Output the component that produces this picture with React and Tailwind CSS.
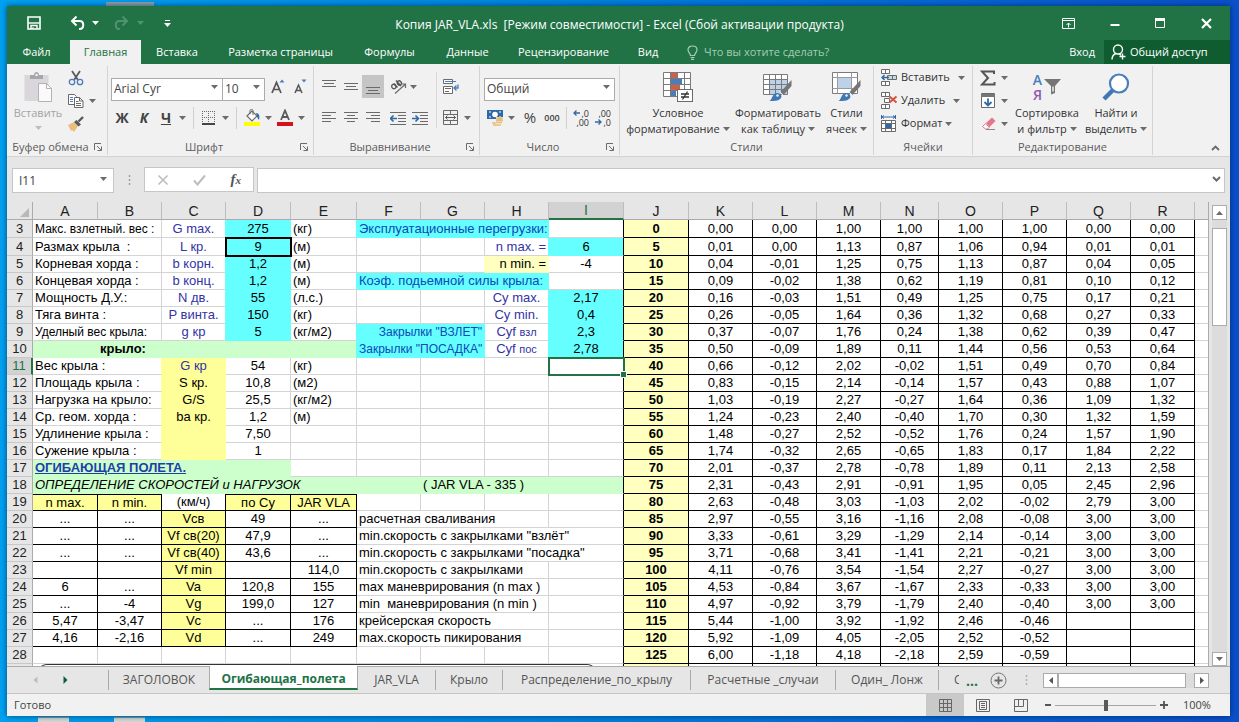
import { useState } from "react";
import clsx from "clsx";

/* ---------- sheet data ---------- */

const COLUMNS = [
  ["A", "w-[65px]"],
  ["B", "w-[64px]"],
  ["C", "w-[64px]"],
  ["D", "w-[65px]"],
  ["E", "w-[66px]"],
  ["F", "w-[64px]"],
  ["G", "w-[64px]"],
  ["H", "w-[64px]"],
  ["I", "w-[75px]"],
  ["J", "w-[65px]"],
  ["K", "w-[64px]"],
  ["L", "w-[64px]"],
  ["M", "w-[64px]"],
  ["N", "w-[58px]"],
  ["O", "w-[64px]"],
  ["P", "w-[64px]"],
  ["Q", "w-[64px]"],
  ["R", "w-[64px]"],
];

const FILLS = {
  cyan: { bg: "bg-[#66ffff]", r: "border-r-[#66ffff]", b: "border-b-[#66ffff]" },
  green: { bg: "bg-[#ccffcc]", r: "border-r-[#ccffcc]", b: "border-b-[#ccffcc]" },
  yellow: { bg: "bg-[#ffff99]", r: "border-r-[#ffff99]", b: "border-b-[#ffff99]" },
  pale: { bg: "bg-[#ffffc0]", r: "border-r-[#ffffc0]", b: "border-b-[#ffffc0]" },
};

const INDIGO = "text-[#3333a5]";
const BLUE = "text-[#0b49b8]";

const blank = {};
const label = (text, span = 2) => ({ text, span });
const mid = (text, extra) => ({ text, align: "center", ...extra });
const sym = (text) => mid(text, { color: INDIGO });
const cyan = (text, extra) => mid(text, { fill: "cyan", ...extra });
const box = (text, extra) => mid(text, { box: true, ...extra });
const speed = (a, b, c, d, e) => [box(a), box(b), box(c, { fill: "yellow" }), box(d), box(e)];

// cells of columns A..I, then J..R
const ROWS = [
  [3, [{ text: "Макс. взлетный. вес :", span: 2, small: true }, sym("G max."), cyan("275"), label("(кг)", 1), { text: "Эксплуатационные перегрузки:", span: 3, fill: "cyan", color: BLUE }, blank],
    "0 0,00 0,00 1,00 1,00 1,00 1,00 0,00 0,00"],
  [4, [label("Размах крыла  :"), sym("L кр."), cyan("9", { framed: true }), label("(м)", 1), blank, blank, { text: "n max. =", align: "right", color: INDIGO }, cyan("6")],
    "5 0,01 0,00 1,13 0,87 1,06 0,94 0,01 0,01"],
  [5, [label("Корневая хорда :"), sym("b корн."), cyan("1,2"), label("(м)", 1), blank, blank, { text: "n min. =", align: "right", fill: "pale" }, mid("-4")],
    "10 0,04 -0,01 1,25 0,75 1,13 0,87 0,04 0,05"],
  [6, [label("Концевая хорда :"), sym("b конц."), cyan("1,2"), label("(м)", 1), { text: "Коэф. подьемной силы крыла:", span: 3, fill: "cyan", color: BLUE }, blank],
    "15 0,09 -0,02 1,38 0,62 1,19 0,81 0,10 0,12"],
  [7, [label("Мощность Д.У.:"), sym("N дв."), cyan("55"), label("(л.с.)", 1), blank, blank, sym("Cy max."), cyan("2,17")],
    "20 0,16 -0,03 1,51 0,49 1,25 0,75 0,17 0,21"],
  [8, [label("Тяга винта :"), sym("P винта."), cyan("150"), label("(кг)", 1), blank, blank, sym("Cy min."), cyan("0,4")],
    "25 0,26 -0,05 1,64 0,36 1,32 0,68 0,27 0,33"],
  [9, [{ text: "Уделный вес крыла:", span: 2, small: true }, sym("g кр"), cyan("5"), label("(кг/м2)", 1), { text: 'Закрылки "ВЗЛЕТ"', span: 2, align: "right", fill: "cyan", color: BLUE, small: true }, { ...sym("Cyf "), sub: "взл" }, cyan("2,3")],
    "30 0,37 -0,07 1,76 0,24 1,38 0,62 0,39 0,47"],
  [10, [{ fill: "green" }, { text: "крыло:", span: 4, fill: "green", bold: true }, { text: 'Закрылки "ПОСАДКА"', span: 2, align: "right", fill: "cyan", color: BLUE, small: true }, { ...sym("Cyf "), sub: "пос" }, cyan("2,78")],
    "35 0,50 -0,09 1,89 0,11 1,44 0,56 0,53 0,64"],
  [11, [label("Вес крыла :"), mid("G кр", { fill: "yellow", color: INDIGO }), mid("54"), label("(кг)", 1), blank, blank, blank, { active: true }],
    "40 0,66 -0,12 2,02 -0,02 1,51 0,49 0,70 0,84"],
  [12, [label("Площадь крыла :"), mid("S кр.", { fill: "yellow" }), mid("10,8"), label("(м2)", 1), blank, blank, blank, blank],
    "45 0,83 -0,15 2,14 -0,14 1,57 0,43 0,88 1,07"],
  [13, [label("Нагрузка на крыло:"), mid("G/S", { fill: "yellow" }), mid("25,5"), label("(кг/м2)", 1), blank, blank, blank, blank],
    "50 1,03 -0,19 2,27 -0,27 1,64 0,36 1,09 1,32"],
  [14, [label("Ср. геом. хорда :"), mid("ba кр.", { fill: "yellow" }), mid("1,2"), label("(м)", 1), blank, blank, blank, blank],
    "55 1,24 -0,23 2,40 -0,40 1,70 0,30 1,32 1,59"],
  [15, [label("Удлинение крыла :"), { fill: "yellow" }, mid("7,50"), blank, blank, blank, blank, blank],
    "60 1,48 -0,27 2,52 -0,52 1,76 0,24 1,57 1,90"],
  [16, [label("Сужение крыла :"), { fill: "yellow" }, mid("1"), blank, blank, blank, blank, blank],
    "65 1,74 -0,32 2,65 -0,65 1,83 0,17 1,84 2,22"],
  [17, [{ text: "ОГИБАЮЩАЯ ПОЛЕТА.", span: 4, fill: "green", bold: true, underline: true, color: "text-[#1f3fa8]" }, blank, blank, blank, blank, blank],
    "70 2,01 -0,37 2,78 -0,78 1,89 0,11 2,13 2,58"],
  [18, [{ text: "ОПРЕДЕЛЕНИЕ СКОРОСТЕЙ и НАГРУЗОК", span: 5, fill: "green", italic: true }, { fill: "green" }, { text: "( JAR VLA - 335 )", span: 2, fill: "green" }, { fill: "green" }],
    "75 2,31 -0,43 2,91 -0,91 1,95 0,05 2,45 2,96"],
  [19, [box("n max.", { fill: "yellow", top: true }), box("n min.", { fill: "yellow", top: true }), box("(км/ч)"), box("по Су", { fill: "yellow", top: true }), box("JAR VLA", { fill: "yellow", top: true }), blank, blank, blank, blank],
    "80 2,63 -0,48 3,03 -1,03 2,02 -0,02 2,79 3,00"],
  [20, [...speed("...", "...", "Vсв", "49", "..."), label("расчетная сваливания", 3), blank],
    "85 2,97 -0,55 3,16 -1,16 2,08 -0,08 3,00 3,00"],
  [21, [...speed("...", "...", "Vf св(20)", "47,9", "..."), label('min.скорость с закрылками "взлёт"', 4)],
    "90 3,33 -0,61 3,29 -1,29 2,14 -0,14 3,00 3,00"],
  [22, [...speed("...", "...", "Vf св(40)", "43,6", "..."), label('min.скорость с закрылками "посадка"', 4)],
    "95 3,71 -0,68 3,41 -1,41 2,21 -0,21 3,00 3,00"],
  [23, [...speed("", "", "Vf min", "", "114,0"), label("min.скорость с закрылками", 3), blank],
    "100 4,11 -0,76 3,54 -1,54 2,27 -0,27 3,00 3,00"],
  [24, [...speed("6", "...", "Va", "120,8", "155"), label("max маневрирования (n max )", 3), blank],
    "105 4,53 -0,84 3,67 -1,67 2,33 -0,33 3,00 3,00"],
  [25, [...speed("...", "-4", "Vg", "199,0", "127"), label("min  маневрирования (n min )", 3), blank],
    "110 4,97 -0,92 3,79 -1,79 2,40 -0,40 3,00 3,00"],
  [26, [...speed("5,47", "-3,47", "Vc", "...", "176"), label("крейсерская скорость", 3), blank],
    "115 5,44 -1,00 3,92 -1,92 2,46 -0,46"],
  [27, [...speed("4,16", "-2,16", "Vd", "...", "249"), label("max.скорость пикирования", 3), blank],
    "120 5,92 -1,09 4,05 -2,05 2,52 -0,52"],
  [28, [blank, blank, blank, blank, blank, blank, blank, blank, blank],
    "125 6,00 -1,18 4,18 -2,18 2,59 -0,59"],
];

const RIGHT_COLS = [0, 1, 2, 3, 4, 5, 6, 7, 8];

const SHEETS = [
  ["ЗАГОЛОВОК", "w-[101px]"],
  ["Огибающая_полета", "w-[149px]"],
  ["JAR_VLA", "w-[77px]"],
  ["Крыло", "w-[67px]"],
  ["Распределение_по_крылу", "w-[188px]"],
  ["Расчетные _случаи", "w-[145px]"],
  ["Один_ Лонж", "w-[103px]"],
];

const TABS = [
  ["Главная", "w-[71px]"],
  ["Вставка", "w-[72px]"],
  ["Разметка страницы", "w-[135px]"],
  ["Формулы", "w-[83px]"],
  ["Данные", "w-[73px]"],
  ["Рецензирование", "w-[119px]"],
  ["Вид", "w-[50px]"],
];

/* ---------- small parts ---------- */

const Svg = ({ w = 16, h = 16, children, className }) => (
  <svg width={w} height={h} viewBox={`0 0 ${w} ${h}`} fill="none" className={clsx("shrink-0", className)} aria-hidden="true">
    {children}
  </svg>
);

const Caret = ({ color = "#6b6b6b", className }) => (
  <Svg w={7} h={4} className={className}>
    <path d="M0 0h7L3.5 4z" fill={color} />
  </Svg>
);

const IconBtn = ({ name, className, children }) => (
  <button type="button" aria-label={name} className={clsx("flex h-[23px] w-[22px] shrink-0 items-center justify-center", className)}>
    {children}
  </button>
);

const CaretBtn = ({ name, className = "w-[11px]" }) => (
  <button type="button" aria-label={name} className={clsx("flex h-[23px] shrink-0 items-center justify-center", className)}>
    <Caret />
  </button>
);

const Sep = ({ className }) => <span className={clsx("h-[22px] w-px shrink-0 bg-[#d0d0d0]", className)} />;

const Combo = ({ name, value, className }) => (
  <div className={clsx("relative h-[23px] shrink-0", className)}>
    <select aria-label={name} defaultValue={value} className="h-full w-full appearance-none border border-[#ababab] bg-white pl-[2px] text-[12px] leading-[20px] text-[#444] outline-none">
      <option>{value}</option>
    </select>
    <Caret className="pointer-events-none absolute right-[5px] top-[10px]" />
  </div>
);

const Group = ({ title, launcher, className, children }) => (
  <section className={clsx("flex shrink-0 flex-col border-r border-[#d4d4d4]", className)}>
    <div className="flex h-[73px]">{children}</div>
    <div className="flex h-4 items-center">
      <h2 className="flex-1 whitespace-nowrap text-center text-[11px] leading-4 text-[#5c5c5c]">{title}</h2>
      {launcher && (
        <button type="button" aria-label={`${title}: параметры`} className="mr-[5px]">
          <Svg w={8} h={8}>
            <path d="M0.5 7V0.5H7M3 3l4 4M7.5 3.5v4h-4" stroke="#6b6b6b" />
          </Svg>
        </button>
      )}
    </div>
  </section>
);

const BigBtn = ({ icon, lines, className }) => (
  <button type="button" className={clsx("flex shrink-0 flex-col items-center whitespace-nowrap pt-[4px] text-[11px] leading-4 text-[#333]", className)}>
    <span className="mb-[2px] flex h-[33px] items-center">{icon}</span>
    <span>{lines[0]}</span>
    <span className="flex items-center gap-[3px]">
      {lines[1]}
      <Caret />
    </span>
  </button>
);

const Lines = ({ rows, y = 1 }) => (
  <Svg w={14} h={14}>
    {rows.map(([x, w], i) => (
      <path key={i} d={`M${x} ${y + i * 3 + 0.5}h${w}`} stroke="#6a6a6a" />
    ))}
  </Svg>
);

/* ---------- icons ---------- */

const PasteIcon = () => (
  <Svg w={29} h={30}>
    <rect x="0.5" y="3" width="24" height="26" fill="#d9d6dc" />
    <path d="M6 7V3h4c0-4 5-4 5 0h4v4z" fill="#a8a6ab" />
    <circle cx="12.500" cy="3" r="1.300" fill="#f0f0f0" />
    <path d="M14.500 11.500h8l5 5v13h-13z" fill="#fafafa" stroke="#b4b2b6" />
    <path d="M22.500 11.500v5h5" stroke="#b4b2b6" />
  </Svg>
);

const CutIcon = () => (
  <Svg>
    <path d="M4 1l6 9M12 1L6 10" stroke="#595959" strokeWidth="1.800" />
    <circle cx="4" cy="12" r="2.700" stroke="#4a7ebb" strokeWidth="1.300" />
    <circle cx="12" cy="12" r="2.700" stroke="#4a7ebb" strokeWidth="1.300" />
  </Svg>
);

const CopyIcon = () => (
  <Svg>
    <path d="M0.500 1.500h6l2 2v8h-8z" fill="#fff" stroke="#6a6a6a" />
    <path d="M2 4.500h3M2 6.500h3M2 8.500h3" stroke="#4a7ebb" />
    <path d="M6.500 4.500h5l3.500 3.500v6.500H6.500z" fill="#fff" stroke="#6a6a6a" />
    <path d="M11.500 4.500V8H15M8 8.500h2.500M8 10.500h5M8 12.500h5" stroke="#6a6a6a" />
  </Svg>
);

const BrushIcon = () => (
  <Svg>
    <path d="M0 9l6-3 4 4-4 6-2-2-1 1z" fill="#eabf7e" />
    <path d="M6 6l4.500 4.500 2.500-2L8.500 4z" fill="#595959" />
    <path d="M10.500 5.500L15 1" stroke="#595959" strokeWidth="2.400" />
  </Svg>
);

const BordersIcon = () => (
  <Svg w={14} h={14}>
    <path d="M0 0.500h13M0 6.500h13M0.500 0v12M6.500 0v12M12.500 0v12" stroke="#6a6a6a" strokeDasharray="1 1" />
    <path d="M0 13h13" stroke="#444" strokeWidth="2" />
  </Svg>
);

const BucketIcon = () => (
  <Svg w={17} h={17}>
    <path d="M3 7l5-5 5 5-5 5z" fill="#fff" stroke="#6a6a6a" strokeWidth="1.200" />
    <path d="M6 5V1.500c0-1.500 3-1.500 3 0V6" stroke="#6a6a6a" />
    <path d="M12 4c3 0 4 3 3 7-1-1-2-3-2-4z" fill="#2f6aa8" />
    <rect x="0" y="13" width="16" height="4" fill="#ffff00" />
  </Svg>
);

const FontColorIcon = () => (
  <Svg w={16} h={17}>
    <path d="M4 11L8 1.500 12 11M5.500 8h5" stroke="#595959" strokeWidth="1.800" />
    <rect x="0" y="13" width="16" height="4" fill="#d4121b" />
  </Svg>
);

const OrientIcon = () => (
  <Svg w={17} h={16}>
    <ellipse cx="3.800" cy="7.600" rx="2" ry="2.300" transform="rotate(-40 3.800 7.600)" stroke="#555" strokeWidth="1.300" />
    <path d="M4 4.500l3.500 4M6 1.500l5 5.500" stroke="#555" strokeWidth="1.300" />
    <ellipse cx="9.300" cy="4" rx="2" ry="2.300" transform="rotate(-40 9.300 4)" stroke="#555" strokeWidth="1.300" />
    <path d="M5 14.500L15 5.500M11.500 5h4v4" stroke="#6a6a6a" strokeWidth="1.200" />
  </Svg>
);

const IndentIcon = ({ right }) => (
  <Svg w={17} h={14}>
    <path d="M0 1.500h16M8 4.500h8M8 7.500h8M8 10.500h8M0 13.500h16" stroke="#6a6a6a" />
    {right ? (
      <path d="M0 7.500h6M3.500 4.500l3 3-3 3" stroke="#2f6aa8" strokeWidth="1.600" />
    ) : (
      <path d="M7 7.500H1M3.500 4.500l-3 3 3 3" stroke="#2f6aa8" strokeWidth="1.600" />
    )}
  </Svg>
);

const WrapIcon = () => (
  <Svg w={17} h={16}>
    <path d="M0.500 0.500h9v4h-9z" fill="#fff" stroke="#6a6a6a" />
    <path d="M2 2.500h11" stroke="#4a7ebb" />
    <path d="M0.500 7.500h9v7h-9z" fill="#fff" stroke="#6a6a6a" />
    <path d="M2 9.500h6M2 12.500h4" stroke="#6a6a6a" />
    <path d="M15 5.500v3.500h-3.500M13.500 6.500L11 9l2.500 2.500" stroke="#4a7ebb" strokeWidth="1.300" />
  </Svg>
);

const MergeIcon = () => (
  <Svg>
    <path d="M0.500 0.500h14v14h-14zM0.500 4.500h14M0.500 10.500h14M7.500 0.500v4M7.500 10.500v4" stroke="#6a6a6a" />
    <path d="M2.500 7.500h10M4.500 5.500l-2 2 2 2M10.500 5.500l2 2-2 2" stroke="#595959" />
  </Svg>
);

const MoneyIcon = () => (
  <Svg w={17} h={17}>
    <rect x="0" y="1" width="16" height="9" fill="#2f6aa8" />
    <path d="M2 3h2M12 3h2M2 8h2M12 8h2" stroke="#fff" />
    <circle cx="8" cy="5.500" r="2.800" fill="#fff" />
    <path d="M9 8h8v8H5v-4h4z" fill="#f0f0f0" />
    <ellipse cx="12.500" cy="9.500" rx="3.500" ry="1.500" fill="#e8bd7a" />
    <path d="M9 11.500h7M9 13.500h6M5 14h4M6 16h8" stroke="#e8bd7a" strokeWidth="1.600" />
  </Svg>
);

const DecimalIcon = ({ less }) => (
  <span className="relative flex h-[18px] w-[16px] flex-col text-[9px] leading-[9px] text-[#333]">
    <span className="text-right">{less ? ",00" : ",0"}</span>
    <span className="text-right">{less ? ",0" : ",00"}</span>
    <Svg w={7} h={6} className={clsx("absolute left-0", less ? "bottom-[2px]" : "top-[1px]")}>
      {less ? (
        <path d="M0 3h6M3.500 0.500L6 3 3.500 5.500" stroke="#2f6aa8" strokeWidth="1.300" />
      ) : (
        <path d="M7 3H1M3.500 0.500L1 3l2.500 2.500" stroke="#2f6aa8" strokeWidth="1.300" />
      )}
    </Svg>
  </span>
);

const BigBrush = () => (
  <>
    <path d="M28.500 8v6l-8 9-3-3z" fill="#757575" />
    <path d="M16.500 19.500l4 4" stroke="#f0f0f0" />
    <path d="M6 29c3 0 3-8 8-8 4 0 6 4 3 6-2 2-6 2-11 2z" fill="#3f78b5" />
    <path d="M13 23l2-1 1 2-2 1z" fill="#e8f0f8" />
  </>
);

const CondIcon = () => (
  <Svg w={30} h={30}>
    <path d="M0.500 0.500h27v24h-27z" fill="#fff" />
    <path d="M0.500 0.500h27v24h-27zM0.500 6.500h27M0.500 12.500h27M0.500 18.500h27M7.500 0.500v24M14.500 0.500v24M21.500 0.500v24" stroke="#7a7a7a" />
    <path d="M8 1h6v5H8zM8 13h9v5H8z" fill="#cf5f49" />
    <path d="M8 7h11v5H8zM8 19h5v5H8z" fill="#4a7ebb" />
    <rect x="14.500" y="17.500" width="15" height="12" fill="#fff" stroke="#6a6a6a" />
    <path d="M18 22h8M18 25h8M24.500 19.500l-5 8" stroke="#333" strokeWidth="1.300" />
  </Svg>
);

const TableIcon = () => (
  <Svg w={30} h={30}>
    <path d="M0.500 2.500h24v20h-24z" fill="#fff" />
    <path d="M7 8h17v14H7z" fill="#bcd2e8" />
    <path d="M0.500 2.500h24v20h-24zM0.500 7.500h24M0.500 12.500h24M0.500 17.500h24M6.500 2.500v20M12.500 2.500v20M18.500 2.500v20" stroke="#7a7a7a" />
    <BigBrush />
  </Svg>
);

const CellStyleIcon = () => (
  <Svg w={30} h={30}>
    <path d="M0.500 0.500h25v21h-25z" fill="#fff" stroke="#7a7a7a" />
    <path d="M0.500 5.500h25M0.500 16.500h25M5.500 0.500v21M19.500 0.500v21" stroke="#9a9a9a" />
    <path d="M6 6h13v10H6z" fill="#bcd2e8" />
    <BigBrush />
  </Svg>
);

const InsertCellIcon = () => (
  <Svg w={17} h={17}>
    <path d="M0.500 0.500h8v4h-8zM4.500 0.500v4M0.500 12.500h8v4h-8zM4.500 12.500v4" fill="#fff" stroke="#6a6a6a" />
    <path d="M6.500 6.500h9v4h-9zM11.500 6.500v4" fill="#c5d8ec" stroke="#6a6a6a" />
    <path d="M8 8.500H1M3.500 6L1 8.500 3.500 11" stroke="#2f6aa8" strokeWidth="1.500" />
  </Svg>
);

const DeleteCellIcon = () => (
  <Svg w={17} h={17}>
    <path d="M0.500 0.500h8v4h-8zM4.500 0.500v4M0.500 12.500h8v4h-8zM4.500 12.500v4M3.500 6.500h5v4h-5z" fill="#fff" stroke="#6a6a6a" />
    <path d="M8.500 4.500l7 6M15.500 4.500l-7 6" stroke="#d0543f" strokeWidth="2" />
  </Svg>
);

const FormatCellIcon = () => (
  <Svg w={17} h={17}>
    <path d="M1 2h13M3 0.500L1 2l2 1.500M12 0.500L14 2l-2 1.500M0.500 0v4M14.500 0v4" stroke="#2f6aa8" />
    <path d="M0.500 5.500h14v11h-14zM0.500 8.500h14M0.500 13.500h14M4.500 5.500v11M10.500 5.500v11" fill="#fff" stroke="#6a6a6a" />
    <rect x="5" y="9" width="5" height="4" fill="#2f6aa8" />
  </Svg>
);

const SortIcon = () => (
  <span className="flex h-[30px] items-center">
    <span className="flex flex-col text-[14px] font-semibold leading-[15px]">
      <span className="text-[#4a7ebb]">А</span>
      <span className="text-[#8e5bb0]">Я</span>
    </span>
    <Svg w={17} h={17} className="ml-[2px]">
      <path d="M0 1h17l-6 7v7l-4 1.500V8z" fill="#757575" />
      <path d="M9 8.500v5" stroke="#f0f0f0" strokeWidth="1.500" />
    </Svg>
  </span>
);

const FindIcon = () => (
  <Svg w={28} h={28}>
    <path d="M11 17L2 26" stroke="#3f78b5" strokeWidth="4.500" />
    <circle cx="17" cy="10.500" r="9" fill="#fff" stroke="#4a7ebb" strokeWidth="2.200" />
  </Svg>
);

/* ---------- window chrome ---------- */

const TitleBar = () => (
  <header className="flex h-[34px] items-center text-white">
    <div className="flex flex-1 items-center pl-[20px]">
      <button type="button" aria-label="Сохранить">
        <Svg w={14} h={14}>
          <path d="M1 1h12v12H1z" stroke="#fff" strokeWidth="1.600" />
          <path d="M1.500 7h11" stroke="#fff" strokeWidth="1.400" />
          <path d="M4 13V9.500h6V13" stroke="#fff" strokeWidth="1.400" />
          <path d="M6 11v2" stroke="#fff" />
        </Svg>
      </button>
      <button type="button" aria-label="Отменить" className="ml-[29px]">
        <Svg w={15} h={14}>
          <path d="M2 5h7.500c5 0 5 8 0 8H9M6.500 0.500L2 5l4.500 4.500" stroke="#fff" strokeWidth="2" />
        </Svg>
      </button>
      <Caret color="#fff" className="ml-[7px]" />
      <button type="button" aria-label="Вернуть" className="ml-[15px]" disabled>
        <Svg w={15} h={14}>
          <path d="M13 5H5.500c-5 0-5 8 0 8H6M8.500 0.500L13 5 8.500 9.500" stroke="#4f9370" strokeWidth="2" />
        </Svg>
      </button>
      <Caret color="#4f9370" className="ml-[8px]" />
      <button type="button" aria-label="Настройка панели быстрого доступа" className="ml-[20px]">
        <Svg w={7} h={7}>
          <path d="M1 0.500h5" stroke="#fff" />
          <path d="M0 3h7l-3.500 4z" fill="#fff" />
        </Svg>
      </button>
    </div>
    <h1 className="whitespace-pre pt-1 text-[12px]">Копия JAR_VLA.xls  [Режим совместимости] - Excel (Сбой активации продукта)</h1>
    <div className="flex flex-1 items-center justify-end gap-[35px] pr-[18px]">
      <button type="button" aria-label="Параметры отображения ленты">
        <Svg w={13} h={11}>
          <path d="M0.500 0.500h12v10h-12zM0.500 2.500h12M6.500 9.500V5M4.500 7l2-2 2 2" stroke="#fff" />
        </Svg>
      </button>
      <button type="button" aria-label="Свернуть">
        <Svg w={10} h={11}>
          <path d="M0.500 7h9" stroke="#fff" strokeWidth="2" />
        </Svg>
      </button>
      <button type="button" aria-label="Развернуть">
        <Svg w={11} h={11}>
          <path d="M0.500 0.500h9v9h-9z" stroke="#fff" />
          <path d="M0 1.500h10" stroke="#fff" strokeWidth="3" />
        </Svg>
      </button>
      <button type="button" aria-label="Закрыть">
        <Svg w={11} h={11}>
          <path d="M1 1l9 9M10 1l-9 9" stroke="#fff" strokeWidth="2.200" />
        </Svg>
      </button>
    </div>
  </header>
);

const TabBar = ({ tab, onSelect }) => (
  <nav className="flex h-6 items-stretch text-[11px] text-white">
    <button type="button" className="w-[63px] pr-[4px]">Файл</button>
    {TABS.map(([t, width]) => (
      <button
        key={t}
        type="button"
        onClick={() => onSelect(t)}
        className={clsx("whitespace-nowrap", width, tab === t && "bg-[#f1f1f1] text-[#217346]")}
      >
        {t}
      </button>
    ))}
    <label className="ml-[14px] flex flex-1 items-center gap-[6px]">
      <Svg w={11} h={15}>
        <path d="M3.500 10.500C3.500 8.500 1 7.500 1 4.800 1 2.500 3 1 5.500 1S10 2.500 10 4.800c0 2.700-2.500 3.700-2.500 5.700zM3.500 12.500h4M4 14.300h3" stroke="#a5cdb6" strokeWidth="1.200" />
      </Svg>
      <input type="text" placeholder="Что вы хотите сделать?" className="w-full bg-transparent text-[11px] outline-none placeholder:text-[#a5cdb6]" />
    </label>
    <button type="button" className="mr-[9px] whitespace-nowrap">Вход</button>
    <button type="button" className="flex w-[126px] items-center gap-1 whitespace-nowrap bg-[#0e5c2f] pl-[7px]">
      <Svg w={15} h={16}>
        <circle cx="7" cy="5.500" r="4.500" stroke="#fff" strokeWidth="1.400" />
        <path d="M1 15.500c0-3 1.500-5 4-6M8 9.800l2 1.500M11.500 9.500v6M8.500 12.500h6" stroke="#fff" strokeWidth="1.400" />
      </Svg>
      Общий доступ
    </button>
  </nav>
);

const Ribbon = () => (
  <div className="flex border-b border-[#d2d2d2] bg-[#f1f1f1] pb-px pt-[2px]">
    <Group title="Буфер обмена" launcher className="w-[101px]">
      <button type="button" className="flex w-[58px] flex-col items-center pl-[4px] pt-[6px] text-[11px] leading-4 text-[#a3a3a3]">
        <PasteIcon />
        <span className="mt-[3px]">Вставить</span>
        <Caret color="#bdbdbd" className="mt-[5px]" />
      </button>
      <div className="flex flex-col">
        <IconBtn name="Вырезать"><CutIcon /></IconBtn>
        <div className="flex">
          <IconBtn name="Копировать"><CopyIcon /></IconBtn>
          <CaretBtn name="Варианты копирования" />
        </div>
        <IconBtn name="Формат по образцу"><BrushIcon /></IconBtn>
      </div>
    </Group>

    <Group title="Шрифт" launcher className="w-[206px]">
      <div className="flex flex-col pl-[3px] pt-[5px]">
        <div className="flex h-[31px] items-center">
          <Combo name="Шрифт" value="Arial Cyr" className="w-[112px]" />
          <Combo name="Размер" value="10" className="-ml-px w-[43px]" />
          <IconBtn name="Увеличить размер" className="ml-[2px]">
            <Svg w={15} h={16}>
              <path d="M1 14L5.500 3.500 10 14M2.500 10.500h6" stroke="#555" strokeWidth="1.700" />
              <path d="M8.500 3.500h5l-2.500-3z" fill="#4a7ebb" />
            </Svg>
          </IconBtn>
          <IconBtn name="Уменьшить размер">
            <Svg w={13} h={16}>
              <path d="M1 14L4.500 6 8 14M2.500 11.500h4" stroke="#555" strokeWidth="1.500" />
              <path d="M7.500 0.500h5l-2.500 3z" fill="#4a7ebb" />
            </Svg>
          </IconBtn>
        </div>
        <div className="flex h-[31px] items-center text-[14px] text-[#444]">
          <IconBtn name="Полужирный" className="font-bold">Ж</IconBtn>
          <IconBtn name="Курсив" className="font-bold italic">К</IconBtn>
          <IconBtn name="Подчеркнутый" className="font-bold underline">Ч</IconBtn>
          <CaretBtn name="Виды подчеркивания" />
          <Sep className="ml-[5px] mr-1" />
          <IconBtn name="Границы"><BordersIcon /></IconBtn>
          <CaretBtn name="Виды границ" />
          <Sep className="ml-[5px] mr-1" />
          <IconBtn name="Цвет заливки"><BucketIcon /></IconBtn>
          <CaretBtn name="Палитра заливки" />
          <IconBtn name="Цвет текста"><FontColorIcon /></IconBtn>
          <CaretBtn name="Палитра текста" />
        </div>
      </div>
    </Group>

    <Group title="Выравнивание" launcher className="w-[166px]">
      <div className="flex flex-col pl-1 pt-[5px]">
        <div className="flex h-[31px] items-center">
          <IconBtn name="По верхнему краю"><Lines y={0} rows={[[0, 14], [2, 10], [0, 14]]} /></IconBtn>
          <IconBtn name="По середине"><Lines y={3} rows={[[0, 14], [2, 10], [0, 14]]} /></IconBtn>
          <IconBtn name="По нижнему краю" className="bg-[#c5c5c5]"><Lines y={7} rows={[[0, 14], [2, 10], [0, 14]]} /></IconBtn>
          <IconBtn name="Ориентация" className="ml-[3px]"><OrientIcon /></IconBtn>
          <CaretBtn name="Варианты ориентации" className="w-[8px]" />
        </div>
        <div className="flex h-[31px] items-center">
          <IconBtn name="По левому краю"><Lines rows={[[0, 14], [0, 9], [0, 14], [0, 9]]} /></IconBtn>
          <IconBtn name="По центру"><Lines rows={[[0, 14], [3, 8], [0, 14], [3, 8]]} /></IconBtn>
          <IconBtn name="По правому краю"><Lines rows={[[0, 14], [5, 9], [0, 14], [5, 9]]} /></IconBtn>
          <IconBtn name="Уменьшить отступ" className="ml-[3px]"><IndentIcon /></IconBtn>
          <IconBtn name="Увеличить отступ"><IndentIcon right /></IconBtn>
        </div>
      </div>
      <span className="ml-[5px] mr-[3px] mt-[6px] h-[56px] w-px bg-[#d8d8d8]" />
      <div className="flex flex-col pt-[5px]">
        <div className="flex h-[31px] items-center">
          <IconBtn name="Перенести текст"><WrapIcon /></IconBtn>
        </div>
        <div className="flex h-[31px] items-center">
          <IconBtn name="Объединить"><MergeIcon /></IconBtn>
          <CaretBtn name="Варианты объединения" />
        </div>
      </div>
    </Group>

    <Group title="Число" launcher className="w-[140px]">
      <div className="flex flex-col pl-1 pt-[5px]">
        <div className="flex h-[31px] items-center">
          <Combo name="Числовой формат" value="Общий" className="w-[131px]" />
        </div>
        <div className="flex h-[31px] items-center text-[#444]">
          <IconBtn name="Финансовый формат"><MoneyIcon /></IconBtn>
          <CaretBtn name="Валюты" />
          <IconBtn name="Процентный формат" className="ml-[2px] text-[15px]">%</IconBtn>
          <IconBtn name="Формат с разделителями" className="text-[9px] font-semibold">000</IconBtn>
          <Sep className="mx-[3px]" />
          <IconBtn name="Увеличить разрядность"><DecimalIcon /></IconBtn>
          <IconBtn name="Уменьшить разрядность"><DecimalIcon less /></IconBtn>
        </div>
      </div>
    </Group>

    <Group title="Стили" className="w-[254px]">
      <BigBtn className="w-[116px]" icon={<CondIcon />} lines={["Условное", "форматирование"]} />
      <BigBtn className="w-[84px]" icon={<TableIcon />} lines={["Форматировать", "как таблицу"]} />
      <BigBtn className="w-[53px]" icon={<CellStyleIcon />} lines={["Стили", "ячеек"]} />
    </Group>

    <Group title="Ячейки" className="w-[99px]">
      <div className="flex flex-col pl-[7px] text-[11px] text-[#333]">
        <button type="button" className="flex h-[23px] items-center gap-[3px]">
          <InsertCellIcon />Вставить<Caret className="ml-[5px]" />
        </button>
        <button type="button" className="flex h-[23px] items-center gap-[3px]">
          <DeleteCellIcon />Удалить<Caret className="ml-[5px]" />
        </button>
        <button type="button" className="flex h-[23px] items-center gap-[3px]">
          <FormatCellIcon />Формат<Caret />
        </button>
      </div>
    </Group>

    <Group title="Редактирование" className="w-[180px]">
      <div className="flex w-[35px] flex-col pl-[4px]">
        <div className="flex">
          <IconBtn name="Автосумма">
            <Svg w={16} h={16}>
              <path d="M14 4V1.500H2L8 8l-6 6.500h12.500V12" stroke="#555" strokeWidth="2" />
            </Svg>
          </IconBtn>
          <CaretBtn name="Функции" />
        </div>
        <div className="flex">
          <IconBtn name="Заполнить">
            <Svg w={15} h={16}>
              <path d="M0.500 0.500h13v14h-13z" fill="#fff" stroke="#6a6a6a" />
              <path d="M0 1h14v3H0z" fill="#757575" />
              <path d="M7 5.500v7M3.500 9L7 12.500 10.500 9" stroke="#2f6aa8" strokeWidth="1.800" />
            </Svg>
          </IconBtn>
          <CaretBtn name="Варианты заполнения" />
        </div>
        <div className="flex">
          <IconBtn name="Очистить">
            <Svg w={15} h={15}>
              <path d="M5 7l6-5.500 3.500 3.500-6 6z" fill="#e3788b" />
              <path d="M4.300 7.700L1.500 10.500 4.500 13h2l1.800-1.800z" fill="#fff" stroke="#e3788b" />
              <path d="M5 13.500h9" stroke="#8a8a8a" />
            </Svg>
          </IconBtn>
          <CaretBtn name="Варианты очистки" />
        </div>
      </div>
      <BigBtn className="w-[78px]" icon={<SortIcon />} lines={["Сортировка", "и фильтр"]} />
      <BigBtn className="w-[60px]" icon={<FindIcon />} lines={["Найти и", "выделить"]} />
    </Group>

    <div className="flex flex-1 items-end justify-end pb-[4px] pr-[10px]">
      <button type="button" aria-label="Свернуть ленту">
        <Svg w={9} h={6}>
          <path d="M1 5l3.500-3.500L8 5" stroke="#6a6a6a" strokeWidth="1.800" />
        </Svg>
      </button>
    </div>
  </div>
);

const FormulaBar = () => (
  <div className="flex h-[45px] items-center bg-[#e6e6e6] pl-[5px] pr-[5px]">
    <div className="relative h-[25px] w-[102px]">
      <input aria-label="Имя ячейки" defaultValue="I11" className="h-full w-full border border-[#c6c6c6] bg-white pl-[6px] text-[12px] text-[#444] outline-none" />
      <Caret className="pointer-events-none absolute right-[7px] top-[10px]" />
    </div>
    <Svg w={3} h={12} className="ml-[14px] mr-[13px]">
      <path d="M1.500 1v2M1.500 5v2M1.500 9v2" stroke="#a0a0a0" strokeWidth="1.500" />
    </Svg>
    <div className="flex h-[25px] w-[110px] items-center justify-around border border-[#c6c6c6] bg-white">
      <button type="button" aria-label="Отмена">
        <Svg w={12} h={12}><path d="M1.500 1.500l9 9M10.500 1.500l-9 9" stroke="#bdbdbd" strokeWidth="1.600" /></Svg>
      </button>
      <button type="button" aria-label="Ввод">
        <Svg w={13} h={12}><path d="M1 6.500l3.500 4L12 1.500" stroke="#bdbdbd" strokeWidth="2" /></Svg>
      </button>
      <button type="button" aria-label="Вставить функцию" className="font-['Liberation_Serif',serif] text-[15px] font-bold italic leading-4 text-[#555]">
        f<span className="text-[11px]">x</span>
      </button>
    </div>
    <div className="relative ml-[3px] h-[25px] flex-1">
      <input aria-label="Строка формул" className="h-full w-full border border-[#c6c6c6] bg-white pl-1 text-[12px] outline-none" />
      <Svg w={9} h={6} className="pointer-events-none absolute right-[4px] top-[9px]">
        <path d="M1 1l3.500 3.500L8 1" stroke="#6a6a6a" strokeWidth="2" />
      </Svg>
    </div>
  </div>
);

/* ---------- sheet ---------- */

const Cell = ({ cell, next }) => {
  const own = FILLS[cell.fill];
  const nextFill = next && FILLS[next.fill];
  const right = cell.box || !next ? "border-r-black" : (nextFill || own)?.r ?? "border-r-[#d4d4d4]";
  const bottom = cell.box ? "border-b-black" : own?.b ?? "border-b-[#d4d4d4]";

  return (
    <td
      colSpan={cell.span || 1}
      className={clsx(
        "whitespace-pre border-b border-r p-0 px-[2px]",
        right,
        bottom,
        own?.bg,
        cell.small && "text-[12px]",
        cell.top && "border-t border-t-black leading-[15px]",
        cell.align === "center" && "text-center",
        cell.align === "right" && "text-right",
        cell.bold && "font-bold",
        cell.italic && "italic",
        cell.underline && "underline",
        cell.framed && "relative z-10 outline-2 -outline-offset-1 outline-black",
        cell.active && "relative z-10 outline-2 -outline-offset-1 outline-[#217346]",
        cell.color
      )}
    >
      {cell.text}
      {cell.sub && <span className="text-[11px]">{cell.sub}</span>}
      {cell.active && <span className="absolute -bottom-[3px] -right-[3px] h-[5px] w-[5px] bg-[#217346] ring-1 ring-white" />}
    </td>
  );
};

const Sheet = () => (
  <div className="flex min-h-0 flex-1 bg-[#e6e6e6]">
    <div className="min-w-0 flex-1 overflow-hidden border-r border-[#ababab] font-['Liberation_Sans',Arial,sans-serif]">
      <table className="w-full table-fixed border-separate border-spacing-0 bg-white text-[13px] leading-4 text-black">
        <colgroup>
          <col className="w-[26px]" />
          {COLUMNS.map(([c, w]) => <col key={c} className={w} />)}
          <col />
        </colgroup>
        <thead>
          <tr className="h-[18px] bg-[#e6e6e6] text-[14px] text-[#222]">
            <th aria-label="Выделить все" className="border-b border-r border-[#ababab] p-0">
              <Svg w={9} h={9} className="ml-auto mr-[3px] mt-[4px]">
                <path d="M9 0v9H0z" fill="#b8b8b8" />
              </Svg>
            </th>
            {COLUMNS.map(([c]) => (
              <th
                key={c}
                className={clsx(
                  "border-r border-r-[#bdbdbd] p-0 font-normal",
                  c === "I" ? "border-b-2 border-b-[#217346] bg-[#d2d2d2] pt-px leading-[15px] text-[#217346]" : "border-b border-b-[#ababab]"
                )}
              >
                {c}
              </th>
            ))}
            <th className="border-b border-[#ababab] p-0" />
          </tr>
        </thead>
        <tbody>
          {ROWS.map(([n, cells, right]) => {
            const values = right.split(" ");
            return (
              <tr key={n} className={n < 5 ? "h-[18px]" : "h-[17px]"}>
                <th
                  className={clsx(
                    "border-b border-r border-b-[#c8c8c8] p-0 text-[13px] font-normal",
                    n === 11 ? "border-r-2 border-r-[#217346] bg-[#d2d2d2] text-[#217346]" : "border-r-[#ababab] bg-[#e6e6e6] text-[#222]"
                  )}
                >
                  {n}
                </th>
                {cells.map((cell, i) => <Cell key={i} cell={cell} next={cells[i + 1]} />)}
                {RIGHT_COLS.map((i) => (
                  <td key={i} className={clsx("border-b border-r border-black p-0 text-center", i === 0 && "bg-[#ffffc0] font-bold")}>
                    {values[i]}
                  </td>
                ))}
                <td className="border-b border-[#d4d4d4] p-0" />
              </tr>
            );
          })}
          <tr className="h-[17px]">
            <th className="border-r border-[#ababab] bg-[#e6e6e6]" />
            <td colSpan={9} className="border-r border-black p-0 pl-[4px] pr-[26px]">
              <div className="h-[17px] rounded-t-[10px] border-x border-t border-[#333]" />
            </td>
            {RIGHT_COLS.map((i) => (
              <td key={i} className={clsx("border-r border-black", i === 0 && "bg-[#ffffc0]")} />
            ))}
            <td />
          </tr>
        </tbody>
      </table>
    </div>
    <div className="ml-[3px] mr-[3px] mt-[3px] flex w-[15px] flex-col bg-[#dcdcdc]">
      <button type="button" aria-label="Вверх" className="flex h-[15px] items-center justify-center border border-[#ababab] bg-white">
        <Svg w={7} h={4}><path d="M0 4h7L3.500 0z" fill="#6b6b6b" /></Svg>
      </button>
      <div className="mt-[8px] h-[98px] border border-[#ababab] bg-white" />
      <button type="button" aria-label="Вниз" className="mt-auto flex h-[14px] items-center justify-center border border-[#ababab] bg-white">
        <Caret />
      </button>
    </div>
  </div>
);

const SheetTabs = ({ sheet, onSelect }) => {
  const active = SHEETS.findIndex(([name]) => name === sheet);

  return (
    <div className="flex h-7 shrink-0 items-stretch border-b border-[#c6c6c6] bg-[#e6e6e6] text-[12px] text-[#555]">
      <div className="flex w-[101px] items-center border-t border-[#ababab] pl-[26px]">
        <button type="button" aria-label="Предыдущие листы">
          <Svg w={5} h={8}><path d="M4.500 0.500v7L0.500 4z" fill="#bdbdbd" /></Svg>
        </button>
        <button type="button" aria-label="Следующие листы" className="ml-[25px]">
          <Svg w={5} h={8}><path d="M0.500 0v8l4-4z" fill="#0e5c3f" /></Svg>
        </button>
      </div>
      {SHEETS.map(([name, width], i) => (
        <button
          key={name}
          type="button"
          onClick={() => onSelect(name)}
          className={clsx(
            "flex shrink-0 items-center whitespace-nowrap",
            width,
            i === active
              ? "mb-[3px] border-x border-b-2 border-x-[#ababab] border-b-[#217346] bg-white pt-[3px] font-bold text-[#217346]"
              : "border-t border-[#ababab]"
          )}
        >
          {i !== active && i !== active + 1 && <span className="h-[20px] w-px bg-[#a8a8a8]" />}
          <span className="flex-1">{name}</span>
        </button>
      ))}
      <div className="flex min-w-0 flex-1 items-center border-t border-[#ababab]">
        <span className="h-[20px] w-px bg-[#a8a8a8]" />
        <span className="ml-[15px] w-[5px] overflow-hidden">С</span>
        <button type="button" aria-label="Другие листы" className="ml-[7px] text-[14px] font-bold text-[#217346]">...</button>
        <button type="button" aria-label="Новый лист" className="ml-[12px]">
          <Svg w={17} h={17}>
            <circle cx="8.500" cy="8.500" r="7.500" stroke="#757575" />
            <path d="M8.500 4.500v8M4.500 8.500h8" stroke="#6a6a6a" strokeWidth="1.800" />
          </Svg>
        </button>
        <Svg w={3} h={12} className="ml-auto">
          <path d="M1.500 1v2M1.500 5v2M1.500 9v2" stroke="#b0b0b0" strokeWidth="1.500" />
        </Svg>
      </div>
      <div className="flex w-[202px] items-center border-t border-[#ababab] pl-[15px]">
        <button type="button" aria-label="Влево" className="flex h-[15px] w-[15px] items-center justify-center border border-[#ababab] bg-white">
          <Svg w={4} h={7}><path d="M4 0v7L0 3.500z" fill="#555" /></Svg>
        </button>
        <div className="h-[15px] w-[128px] border border-[#ababab] bg-white" />
        <div className="h-[15px] w-[8px] bg-[#dcdcdc]" />
        <button type="button" aria-label="Вправо" className="flex h-[15px] w-[15px] items-center justify-center border border-[#ababab] bg-white">
          <Svg w={4} h={7}><path d="M0 0v7l4-3.500z" fill="#555" /></Svg>
        </button>
      </div>
    </div>
  );
};

const StatusBar = () => (
  <footer className="flex h-[22px] shrink-0 items-center bg-[#f1f1f1] text-[11px] text-[#444]">
    <span className="flex-1 pl-[7px]">Готово</span>
    <button type="button" aria-label="Обычный" className="flex h-full w-[38px] items-center justify-center bg-[#c9c9c9]">
      <Svg w={13} h={13}>
        <path d="M0.500 0.500h12v12h-12zM0.500 4.500h12M0.500 8.500h12M4.500 0.500v12M8.500 0.500v12" stroke="#666" />
      </Svg>
    </button>
    <button type="button" aria-label="Разметка страницы" className="flex h-full w-[38px] items-center justify-center">
      <Svg w={14} h={13}>
        <path d="M0.500 0.500h13v12h-13zM3.500 2.500h7v8h-7zM5 4.500h4M5 6.500h4M5 8.500h4" stroke="#666" />
      </Svg>
    </button>
    <button type="button" aria-label="Страничный режим" className="flex h-full w-[38px] items-center justify-center">
      <Svg w={14} h={13}>
        <path d="M0.500 0.500h13v12h-13zM4.500 0.500v7h5v-7M0.500 7.500h4" stroke="#666" />
      </Svg>
    </button>
    <button type="button" aria-label="Уменьшить" className="ml-[4px]">
      <Svg w={8} h={10}><path d="M1 5h6" stroke="#555" strokeWidth="2" /></Svg>
    </button>
    <input
      type="range"
      aria-label="Масштаб"
      min="0"
      max="200"
      defaultValue="100"
      className="mx-[3px] h-[12px] w-[101px] appearance-none bg-[linear-gradient(#a6a6a6,#a6a6a6)] bg-[length:100%_1px] bg-center bg-no-repeat [&::-webkit-slider-thumb]:h-[11px] [&::-webkit-slider-thumb]:w-[4px] [&::-webkit-slider-thumb]:appearance-none [&::-webkit-slider-thumb]:bg-[#595959]"
    />
    <button type="button" aria-label="Увеличить">
      <Svg w={9} h={10}><path d="M1 5h8M5 1v8" stroke="#555" strokeWidth="1.800" /></Svg>
    </button>
    <span className="w-[62px] pl-[15px]">100%</span>
  </footer>
);

export default function App() {
  const [tab, setTab] = useState("Главная");
  const [sheet, setSheet] = useState("Огибающая_полета");

  return (
    <div className="relative flex h-screen flex-col overflow-hidden bg-[linear-gradient(90deg,#00a2f2,#0084e0_45%,#0a50cc)] pb-[6px] pl-[7px] pr-[9px] pt-[6px] font-['Open_Sans','Noto_Sans',sans-serif]">
      {/* desktop icons behind the window */}
      <span className="absolute left-[106px] top-[2px] h-[4px] w-[48px] bg-[#8fa3ad]" />
      <span className="absolute bottom-0 left-[38px] h-[5px] w-[31px] border-t border-[#8a9a9a] bg-[#d5dad5]" />
      <span className="absolute bottom-0 left-[114px] h-[5px] w-[31px] border-t border-[#8a9a9a] bg-[#d5dad5]" />

      <div className="relative flex min-h-0 flex-1 flex-col bg-[#217346] shadow-[0_0_6px_rgba(0,30,60,0.7)]">
        <TitleBar />
        <TabBar tab={tab} onSelect={setTab} />
        <Ribbon />
        <FormulaBar />
        <Sheet />
        <SheetTabs sheet={sheet} onSelect={setSheet} />
        <StatusBar />
      </div>
    </div>
  );
}
